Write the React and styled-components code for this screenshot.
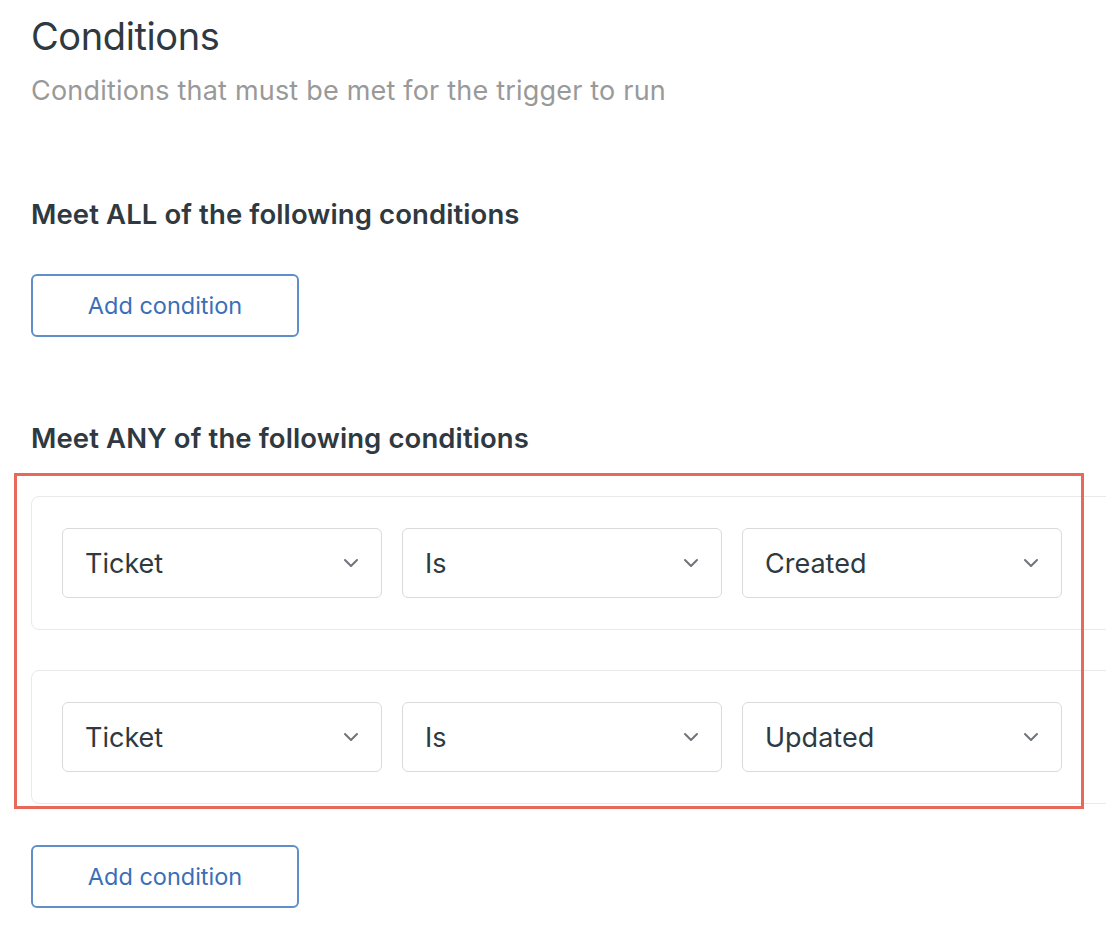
import React from "react";
import styled, { createGlobalStyle } from "styled-components";

const GlobalStyle = createGlobalStyle`
  html, body {
    margin: 0;
    padding: 0;
    background: #ffffff;
    overflow: hidden;
  }
  body {
    font-family: Inter, "Noto Sans", sans-serif;
    color: #2f3941;
  }
`;

const Page = styled.div`
  padding: 13px 0 0 31px;
  width: 1200px;
`;

const Title = styled.h1`
  margin: 0;
  font-size: 38px;
  line-height: 46px;
  font-weight: 400;
  color: #2f3941;
  letter-spacing: -0.4px;
`;

const Subtitle = styled.p`
  margin: 16px 0 0;
  font-size: 27px;
  line-height: 32px;
  color: #999999;
  letter-spacing: 0.2px;
`;

const SectionTitle = styled.h2`
  margin: ${(p) => p.$top}px 0 0;
  font-size: 27.5px;
  line-height: 32px;
  font-weight: 600;
  color: #2f3941;
  letter-spacing: 0.1px;
`;

const AddButton = styled.button`
  display: flex;
  align-items: center;
  justify-content: center;
  margin-top: ${(p) => p.$top}px;
  width: 268px;
  height: 63px;
  background: #fff;
  border: 2px solid #5e8fc8;
  border-radius: 6px;
  font-family: Inter, "Noto Sans", sans-serif;
  font-size: 23.5px;
  color: #3a6fb7;
  cursor: pointer;
`;

const ConditionList = styled.div`
  position: relative;
  margin-top: 42px;
  display: flex;
  flex-direction: column;
  gap: 40px;
`;

const Highlight = styled.div`
  position: absolute;
  left: -17px;
  top: -23px;
  width: 1070px;
  height: 336px;
  box-sizing: border-box;
  border: 3px solid #e8685a;
  pointer-events: none;
`;

const Card = styled.div`
  width: 1120px;
  box-sizing: border-box;
  padding: 31px 30px;
  border: 1.5px solid #e9e9e9;
  border-radius: 8px;
  display: flex;
  gap: 20px;
`;

const Select = styled.div`
  width: 320px;
  height: 70px;
  box-sizing: border-box;
  border: 1.5px solid #d8dadc;
  border-radius: 6px;
  padding: 0 22px 0 22px;
  display: flex;
  align-items: center;
  justify-content: space-between;
  font-size: 27px;
  color: #2f3941;
`;

const Chevron = () => (
  <svg width="16" height="10" viewBox="0 0 16 10" fill="none">
    <path d="M2 2l6 6 6-6" stroke="#6f7479" strokeWidth="2" strokeLinecap="round" strokeLinejoin="round" />
  </svg>
);

const rows = [
  ["Ticket", "Is", "Created"],
  ["Ticket", "Is", "Updated"],
];

export default function App() {
  return (
    <>
      <GlobalStyle />
      <Page>
        <Title>Conditions</Title>
        <Subtitle>Conditions that must be met for the trigger to run</Subtitle>
        <SectionTitle $top={91}>Meet ALL of the following conditions</SectionTitle>
        <AddButton $top={44}>Add condition</AddButton>
        <SectionTitle $top={85}>Meet ANY of the following conditions</SectionTitle>
        <ConditionList>
          <Highlight />
          {rows.map((row, i) => (
            <Card key={i}>
              {row.map((value, j) => (
                <Select key={j}>
                  <span>{value}</span>
                  <Chevron />
                </Select>
              ))}
            </Card>
          ))}
        </ConditionList>
        <AddButton $top={41}>Add condition</AddButton>
      </Page>
    </>
  );
}
